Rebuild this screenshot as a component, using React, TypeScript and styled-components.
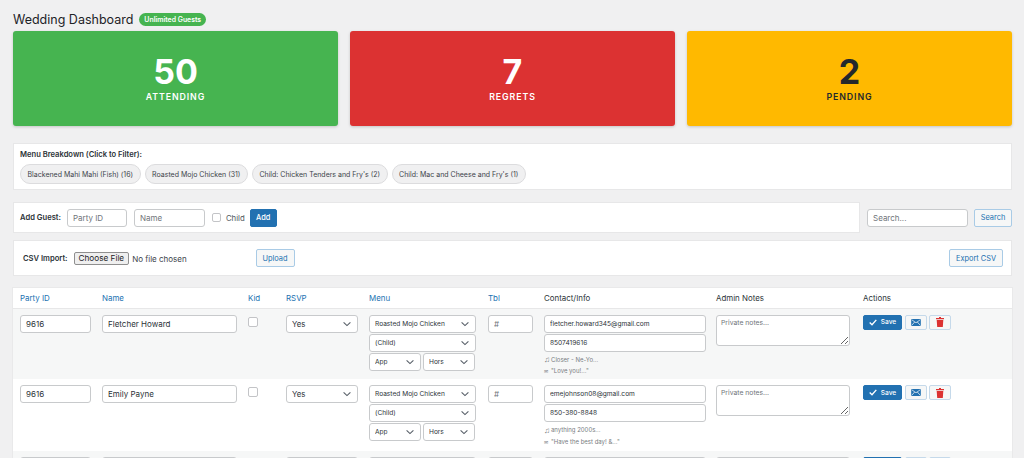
import React from 'react';
import styled, { createGlobalStyle } from 'styled-components';

const chevron = "url(\"data:image/svg+xml,%3Csvg xmlns='http://www.w3.org/2000/svg' width='12' height='12' viewBox='0 0 12 12'%3E%3Cpath d='M2.6 4.4 6 7.6l3.4-3.2' fill='none' stroke='%23555d66' stroke-width='1.1'/%3E%3C/svg%3E\")";

const Global = createGlobalStyle`
  html, body { margin: 0; padding: 0; background: #f0f0f1; overflow: hidden; height: 458px; }
  * { box-sizing: border-box; }
  body { font-family: Inter, "Liberation Sans", sans-serif; color: #3c434a; font-size: 9px; }
  input, select, textarea, button { font-family: Inter, "Liberation Sans", sans-serif; }
  ::placeholder { color: #70757a; opacity: 1; }
`;
const Page = styled.div`padding: 8px 12px 0 13px; width: 1024px;`;
const TitleRow = styled.header`display: flex; align-items: center; gap: 6px; height: 23px;`;
const Title = styled.h1`margin: 0; font-size: 12.5px; font-weight: 400; color: #1d2327; line-height: 18px;`;
const Badge = styled.span`background: #46b450; color: #fff; font-size: 6.9px; font-weight: 600; height: 13px; line-height: 13px; padding: 0 5px; border-radius: 7px;`;
const Cards = styled.section`display: grid; grid-template-columns: repeat(3, 1fr); gap: 12px; margin-bottom: 17px;`;
const Card = styled.div<{ $bg: string; $fg: string }>`
  height: 95px; background: ${p => p.$bg}; color: ${p => p.$fg}; border-radius: 3px;
  box-shadow: 0 1px 3px rgba(0,0,0,.18);
  display: flex; flex-direction: column; align-items: center; justify-content: center;
`;
const Num = styled.div`font-size: 34px; font-weight: 700; line-height: 36px;`;
const Lab = styled.div`font-size: 8.8px; font-weight: 600; letter-spacing: .9px; line-height: 12px; margin-top: .7px;`;
const Panel = styled.section`background: #fff; border: 1px solid #e7e7e8;`;
const MenuPanel = styled(Panel)`padding: 5px 6px 5px; height: 47px; margin-bottom: 12px;`;
const MenuTitle = styled.div`font-size: 7.6px; font-weight: 600; color: #2c3338; line-height: 11px; margin-bottom: 4px;`;
const Pills = styled.div`display: flex; gap: 4px;`;
const Pill = styled.button`
  height: 20px; border: 1px solid #dcdcde; border-radius: 10px; background: #f0f0f1; color: #3c434a;
  font-size: 7px; padding: 0 6.5px;
`;
const AddRow = styled.div`display: flex; gap: 7px; margin-bottom: 7px; align-items: center;`;
const AddPanel = styled(Panel)`width: 847px; height: 31px; display: flex; align-items: center; padding: 0 6px;`;
const Label = styled.span`font-size: 7.6px; font-weight: 600; color: #2c3338;`;
const Field = styled.input<{ $w?: number }>`
  width: ${p => p.$w ? `${p.$w}px` : '100%'}; height: 18px; border: 1px solid #c8cacc; border-radius: 3px; background: #fff;
  padding: 0 5px; font-size: 8px; color: #2c3338; display: block; outline: none;
`;
const AddLabel = styled(Label)`margin-right: 6px;`;
const Spaced = styled.span`margin-right: 7px; display: flex;`;
const Check = styled.input.attrs({ type: 'checkbox' }) <{ $s?: number }>`
  appearance: none; width: ${p => p.$s ?? 9}px; height: ${p => p.$s ?? 9}px; margin: 0; border: 1px solid #c3c4c7; border-radius: 2px; background: #fff; display: block;
`;
const ChildLabel = styled.label`display: flex; align-items: center; gap: 5px; font-size: 7.8px; color: #50575e; margin-right: 5px;`;
const PrimaryBtn = styled.button`
  background: #2271b1; color: #fff; border: 1px solid #2271b1; border-radius: 2px; height: 18px; padding: 0; font-size: 7.4px; font-weight: 500;
  display: inline-flex; align-items: center; justify-content: center; width: 27px;
`;
const GhostBtn = styled.button<{ $w: number }>`
  background: #f6f7f7; color: #2271b1; border: 1px solid #a9cbe6; border-radius: 2px; height: 18px; width: ${p => p.$w}px;
  font-size: 7.4px; padding: 0;
`;
const SearchWrap = styled.div`display: flex; gap: 6px; align-items: center;`;
const CsvPanel = styled(Panel)`height: 36px; display: flex; align-items: center; justify-content: space-between; padding: 0 8px 0 9px; margin-bottom: 12px;`;
const CsvLeft = styled.div`display: flex; align-items: center;`;
const FileIn = styled.input.attrs({ type: 'file' })`
  width: 177px; font-size: 8px; color: #3c434a; margin-left: 6px; margin-right: 5px;
  &::file-selector-button { font-size: 8.2px; font-family: Inter, sans-serif; height: 13px; padding: 0 4px; margin-right: 3px; background: #efefef; border: 1px solid #8f8f8f; border-radius: 2px; color: #1d2327; }
`;
const TableBox = styled.table`
  width: 999px; border-collapse: collapse; table-layout: fixed; background: #fff; box-shadow: 0 0 0 1px #e9e9ea;
`;
const Th = styled.th<{ $link?: boolean }>`
  text-align: left; padding: 0 4px 0 7px; height: 20px; font-size: 7.9px; font-weight: 400;
  color: ${p => p.$link ? '#2271b1' : '#2c3338'}; border-bottom: 1px solid #e7e7e8;
`;
const Row = styled.tr<{ $alt?: boolean }>`background: ${p => p.$alt ? '#f6f7f7' : '#fff'};`;
const Td = styled.td`padding: 6px 4px 0 7px; vertical-align: top; height: 71.3px;`;
const Sel = styled.select<{ $w?: number }>`
  appearance: none; width: ${p => p.$w ? `${p.$w}px` : '100%'}; height: 18px; border: 1px solid #c8cacc; border-radius: 3px;
  background: #fff ${chevron} no-repeat right 4px center; padding: 0 5px; font-size: 6.6px; color: #2c3338; display: block; outline: none;
`;
const RsvpSel = styled(Sel)`font-size: 7.8px;`;
const Stack = styled.div`display: flex; flex-direction: column; gap: 1px;`;
const Pair = styled.div`display: flex; gap: 2px;`;
const MailField = styled(Field)`font-size: 6.6px;`;
const Note = styled.div`font-size: 6px; color: #787c82; line-height: 11.7px; white-space: nowrap; display: flex; align-items: center;`;
const NoteGlyph = styled.span<{ $size: number }>`font-size: ${p => p.$size}px; line-height: 8px; width: 7px; flex: none;`;
const NotesBlock = styled.div`margin-top: 2px;`;
const Area = styled.textarea`
  display: block; width: 134px; height: 31px; border: 1px solid #c8cacc; border-radius: 3px; padding: 2px 4px; font-size: 6.8px; background: #fff; margin: 0; color: #2c3338; outline: none;
`;
const CenterCheck = styled.div`padding-top: 2px;`;
const Actions = styled.div`display: flex; gap: 2.5px;`;
const SaveBtn = styled(PrimaryBtn)`width: 39px; height: 15px; font-size: 6.6px; gap: 4px;`;
const IconBtn = styled.button`
  width: 22px; height: 15px; background: #f6f7f7; border: 1px solid #c5d9ea; border-radius: 2px; padding: 0; display: flex; align-items: center; justify-content: center;
`;

const CheckIcon = () => (
  <svg width="8" height="7" viewBox="0 0 8 7"><path d="M.7 3.6 3 5.8 7.3.9" fill="none" stroke="#fff" strokeWidth="1.4" /></svg>
);
const MailIcon = () => (
  <svg width="10" height="7" viewBox="0 0 11 8"><rect width="11" height="8" fill="#2271b1" /><path d="M.5.8 5.5 4.3 10.5.8M.5 7.4 4 3.4M10.5 7.4 7 3.4" fill="none" stroke="#fff" strokeWidth=".8" /></svg>
);
const TrashIcon = () => (
  <svg width="8" height="10" viewBox="0 0 8 10"><path d="M3 0h2v1h3v1.2H0V1h3zM.7 3h6.6l-.5 7H1.2z" fill="#dc3232" /></svg>
);

type Guest = { id: string; name: string; email: string; phone: string; song: string; msg: string };
const guests: Guest[] = [
  { id: '9616', name: 'Fletcher Howard', email: 'fletcher.howard345@gmail.com', phone: '8507419616', song: 'Closer - Ne-Yo...', msg: '"Love you!..."' },
  { id: '9616', name: 'Emily Payne', email: 'emejohnson08@gmail.com', phone: '850-380-8848', song: 'anything 2000s...', msg: '"Have the best day! &..."' },
  { id: '', name: '', email: '', phone: '', song: '', msg: '' },
];
const pills = ['Blackened Mahi Mahi (Fish) (16)', 'Roasted Mojo Chicken (31)', "Child: Chicken Tenders and Fry's (2)", "Child: Mac and Cheese and Fry's (1)"];
const cols = [82, 146, 38, 83, 119, 56, 172, 147, 156];

export default function App() {
  return (
    <Page>
      <Global />
      <TitleRow>
        <Title>Wedding Dashboard</Title>
        <Badge>Unlimited Guests</Badge>
      </TitleRow>
      <Cards>
        <Card $bg="#46b450" $fg="#fff"><Num>50</Num><Lab>ATTENDING</Lab></Card>
        <Card $bg="#dc3232" $fg="#fff"><Num>7</Num><Lab>REGRETS</Lab></Card>
        <Card $bg="#ffb900" $fg="#23282d"><Num>2</Num><Lab>PENDING</Lab></Card>
      </Cards>
      <MenuPanel>
        <MenuTitle>Menu Breakdown (Click to Filter):</MenuTitle>
        <Pills>{pills.map(p => <Pill key={p}>{p}</Pill>)}</Pills>
      </MenuPanel>
      <AddRow>
        <AddPanel>
          <AddLabel>Add Guest:</AddLabel>
          <Spaced><Field $w={60} placeholder="Party ID" /></Spaced>
          <Spaced><Field $w={71} placeholder="Name" /></Spaced>
          <ChildLabel><Check />Child</ChildLabel>
          <PrimaryBtn>Add</PrimaryBtn>
        </AddPanel>
        <SearchWrap>
          <Field $w={101} placeholder="Search..." />
          <GhostBtn $w={38}>Search</GhostBtn>
        </SearchWrap>
      </AddRow>
      <CsvPanel>
        <CsvLeft>
          <Label>CSV Import:</Label>
          <FileIn />
          <GhostBtn $w={39}>Upload</GhostBtn>
        </CsvLeft>
        <GhostBtn $w={54}>Export CSV</GhostBtn>
      </CsvPanel>
      <TableBox>
        <colgroup>{cols.map((c, i) => <col key={i} style={{ width: c }} />)}</colgroup>
        <thead>
          <tr>
            <Th $link>Party ID</Th><Th $link>Name</Th><Th $link>Kid</Th><Th $link>RSVP</Th><Th $link>Menu</Th><Th $link>Tbl</Th>
            <Th>Contact/Info</Th><Th>Admin Notes</Th><Th>Actions</Th>
          </tr>
        </thead>
        <tbody>
          {guests.map((g, i) => (
            <Row key={i} $alt={i % 2 === 0}>
              <Td><Field $w={71} defaultValue={g.id} /></Td>
              <Td><Field $w={135} defaultValue={g.name} /></Td>
              <Td><CenterCheck><Check $s={10} /></CenterCheck></Td>
              <Td><RsvpSel $w={72}><option>Yes</option></RsvpSel></Td>
              <Td>
                <Stack>
                  <Sel $w={107}><option>Roasted Mojo Chicken</option></Sel>
                  <Sel $w={107}><option>(Child)</option></Sel>
                  <Pair>
                    <Sel $w={52}><option>App</option></Sel>
                    <Sel $w={52}><option>Hors</option></Sel>
                  </Pair>
                </Stack>
              </Td>
              <Td><Field $w={45} placeholder="#" /></Td>
              <Td>
                <Stack>
                  <MailField $w={162} defaultValue={g.email} />
                  <MailField $w={162} defaultValue={g.phone} />
                </Stack>
                {g.song && (
                  <NotesBlock>
                    <Note><NoteGlyph $size={8}>♫</NoteGlyph>{g.song}</Note>
                    <Note><NoteGlyph $size={5}>✉</NoteGlyph>{g.msg}</Note>
                  </NotesBlock>
                )}
              </Td>
              <Td><Area placeholder="Private notes..." /></Td>
              <Td>
                <Actions>
                  <SaveBtn><CheckIcon />Save</SaveBtn>
                  <IconBtn><MailIcon /></IconBtn>
                  <IconBtn><TrashIcon /></IconBtn>
                </Actions>
              </Td>
            </Row>
          ))}
        </tbody>
      </TableBox>
    </Page>
  );
}
